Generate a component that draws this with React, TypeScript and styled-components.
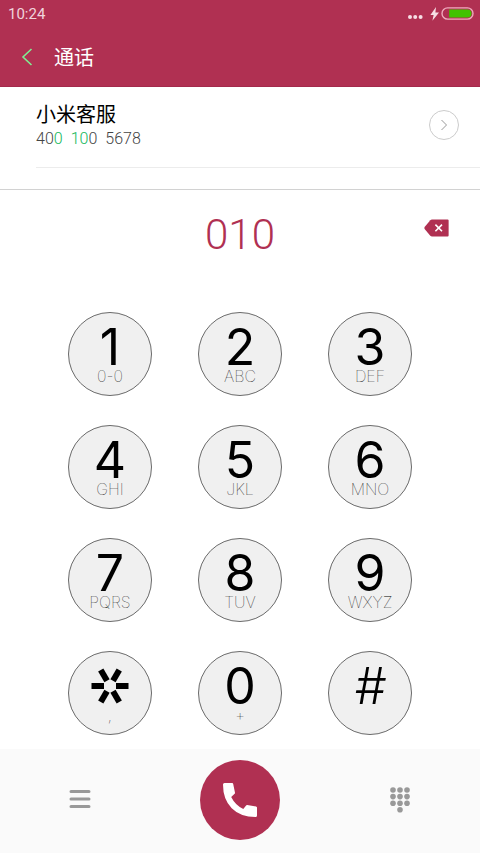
import React from "react";
import styled, { createGlobalStyle } from "styled-components";

const crimson = "#b03052";

const GlobalStyle = createGlobalStyle`
  *, *::before, *::after { box-sizing: border-box; }
  body {
    margin: 0;
    background: #ffffff;
    font-family: Roboto, "Noto Sans CJK SC", sans-serif;
  }
`;

const PlainButton = styled.button`
  padding: 0;
  border: 0;
  background: none;
  color: inherit;
  font: inherit;
  cursor: pointer;
  display: flex;
  align-items: center;
  justify-content: center;
`;

const Screen = styled.div`
  min-height: 100vh;
  display: flex;
  flex-direction: column;
`;

const Header = styled.header`
  background: ${crimson};
  color: #ffffff;
  border-bottom: 1px solid #a32a4c;
`;

const StatusBar = styled.div`
  padding: 0 6px 0 8px;
  display: flex;
  align-items: center;
  justify-content: space-between;
  font-size: 15px;
  line-height: 28px;
  color: #f0d3dc;
`;

const TitleBar = styled.div`
  height: 58px;
  padding: 0 20px;
  display: flex;
  align-items: center;
  gap: 20px;
`;

const BackButton = styled(PlainButton)`
  width: 14px;
  height: 28px;
`;

const Title = styled.h1`
  margin: 0;
  font-family: "Noto Sans CJK SC", sans-serif;
  font-size: 20px;
  line-height: 28px;
  font-weight: 400;
`;

const Contacts = styled.section`
  border-bottom: 1px solid #d2d2d2;
  padding: 0 0 21px 36px;
`;

const ContactRow = styled.div`
  height: 81px;
  padding: 0 21px 4px 0;
  border-bottom: 1px solid #ececec;
  display: flex;
  align-items: center;
  justify-content: space-between;
`;

const ContactName = styled.div`
  font-family: "Noto Sans CJK SC", sans-serif;
  font-size: 20px;
  line-height: 28px;
  color: #000000;
`;

const ContactNumber = styled.div`
  display: flex;
  gap: 8px;
  font-size: 16px;
  line-height: 22px;
  font-weight: 300;
  color: #444444;
`;

const Match = styled.span`
  color: #12b85c;
`;

const DetailButton = styled(PlainButton)`
  width: 30px;
  height: 30px;
  border: 1px solid #cccccc;
  border-radius: 50%;
`;

const Entry = styled.section`
  height: 122px;
  padding: 16px 30px 0;
  display: grid;
  grid-template-columns: 26px 1fr 26px;
  align-items: start;
`;

const EntryNumber = styled.output`
  grid-column: 2;
  text-align: center;
  font-size: 42px;
  line-height: 58px;
  font-weight: 300;
  color: ${crimson};
`;

const DeleteButton = styled(PlainButton)`
  height: 44px;
`;

const Keypad = styled.main`
  flex: 1;
  display: grid;
  grid-template-columns: repeat(3, 84px);
  grid-auto-rows: 84px;
  justify-content: center;
  gap: 29px 46px;
  padding-bottom: 14px;
`;

const Key = styled(PlainButton)`
  border: 1px solid #6a6a6a;
  border-radius: 50%;
  background: #f0f0f0;
  padding-top: 13px;
  flex-direction: column;
  justify-content: flex-start;
  font-family: Inter, "Liberation Sans", sans-serif;
  color: #000000;
`;

const Digit = styled.span<{ $slanted: boolean }>`
  height: 42px;
  display: flex;
  align-items: center;
  font-size: 50px;
  line-height: 42px;
  font-weight: ${(p) => (p.$slanted ? 300 : 400)};
  font-style: ${(p) => (p.$slanted ? "italic" : "normal")};
`;

const Letters = styled.span`
  font-size: 16px;
  line-height: 16px;
  font-weight: 100;
  color: #000000;
`;

const ActionBar = styled.footer`
  height: 104px;
  padding-bottom: 2px;
  background: #fafafa;
  display: grid;
  grid-template-columns: repeat(3, 1fr);
  align-items: center;
  justify-items: center;
`;

const ActionButton = styled(PlainButton)`
  width: 44px;
  height: 44px;
`;

const CallButton = styled(PlainButton)`
  width: 80px;
  height: 80px;
  border-radius: 50%;
  background: ${crimson};
`;

const Star = () => (
  <svg width="36" height="36" viewBox="-18 -18 36 36" stroke="#000" strokeWidth="6" overflow="visible" aria-hidden="true">
    {[0, 60, 120, 180, 240, 300].map((angle) => (
      <line key={angle} x1="6" y1="0" x2="18.5" y2="0" transform={`rotate(${angle})`} />
    ))}
  </svg>
);

const keys = [
  { digit: "1", letters: "0-0" },
  { digit: "2", letters: "ABC" },
  { digit: "3", letters: "DEF" },
  { digit: "4", letters: "GHI" },
  { digit: "5", letters: "JKL" },
  { digit: "6", letters: "MNO" },
  { digit: "7", letters: "PQRS" },
  { digit: "8", letters: "TUV" },
  { digit: "9", letters: "WXYZ" },
  { digit: "*", letters: "," },
  { digit: "0", letters: "+" },
  { digit: "#", letters: "" },
];

export default function App() {
  return (
    <Screen>
      <GlobalStyle />
      <Header>
        <StatusBar>
          <time>10:24</time>
          <svg width="66" height="14" viewBox="0 0 66 14" role="img" aria-label="充电中">
            <g fill="#f6dde4">
              <circle cx="2" cy="10" r="2" />
              <circle cx="7.2" cy="10" r="2" />
              <circle cx="12.6" cy="10" r="2" />
              <path d="M28 0 22.4 8 H25.6 L24.4 13.8 31 5.4 H27.4 Z" />
            </g>
            <rect x="34" y="0.9" width="31" height="11.2" rx="5.6" fill="none" stroke="#f0a9bd" strokeWidth="1.4" />
            <path d="M41.2 2.4 H59.4 a4.1 4.1 0 0 1 0 8.2 H41.2 Z" fill="#41c300" />
          </svg>
        </StatusBar>
        <TitleBar>
          <BackButton aria-label="返回">
            <svg width="12" height="18" viewBox="0 0 12 18" fill="none" stroke="#7fee93" strokeWidth="1.6">
              <path d="M10.5 1 2 9 10.5 17" />
            </svg>
          </BackButton>
          <Title>通话</Title>
        </TitleBar>
      </Header>

      <Contacts>
        <ContactRow>
          <div>
            <ContactName>小米客服</ContactName>
            <ContactNumber>
              <span>40<Match>0</Match></span>
              <span><Match>10</Match>0</span>
              <span>5678</span>
            </ContactNumber>
          </div>
          <DetailButton aria-label="查看详情">
            <svg width="8" height="12" viewBox="0 0 8 12" fill="none" stroke="#999" strokeWidth="1">
              <path d="M1.5 1 6.5 6 1.5 11" />
            </svg>
          </DetailButton>
        </ContactRow>
      </Contacts>

      <Entry>
        <EntryNumber>010</EntryNumber>
        <DeleteButton aria-label="删除">
          <svg width="26" height="18" viewBox="0 0 26 18">
            <path d="M8 .5 H23.6 a1 1 0 0 1 1 1 V16.5 a1 1 0 0 1 -1 1 H8 Q7 17.5 6.3 16.8 L.6 10 Q0 9 .6 8 L6.3 1.2 Q7 .5 8 .5 Z" fill={crimson} />
            <path d="M11.4 5.6 18 12.2 M18 5.6 11.4 12.2" stroke="#fff" strokeWidth="1.6" />
          </svg>
        </DeleteButton>
      </Entry>

      <Keypad>
        {keys.map(({ digit, letters }) => (
          <Key key={digit} aria-label={digit}>
            <Digit $slanted={digit === "#"}>{digit === "*" ? <Star /> : digit}</Digit>
            <Letters>{letters}</Letters>
          </Key>
        ))}
      </Keypad>

      <ActionBar>
        <ActionButton aria-label="菜单">
          <svg width="22" height="22" viewBox="0 0 22 22" stroke="#999" strokeWidth="3" strokeLinecap="round">
            <path d="M2 2.5 H20 M2 10 H20 M2 17.5 H20" />
          </svg>
        </ActionButton>
        <CallButton aria-label="拨号">
          <svg width="34" height="34" viewBox="0 0 34 34" fill="#fff">
            <path d="M1.5 0 H9.2 Q10 0 10.2 1 L12 9.8 Q12.1 10.4 11.6 10.8 L8.2 14 Q12.4 22.4 20.3 26 L23.1 22.6 Q23.5 22 24.2 22.1 L33 23.4 Q34 23.6 34 24.5 V32.5 Q34 34 32.5 34 Q17.5 34 8.7 25.2 Q0 16.5 0 1.5 Q0 0 1.5 0 Z" />
          </svg>
        </CallButton>
        <ActionButton aria-label="拨号键盘">
          <svg width="20" height="26" viewBox="0 0 20 26" fill="#999">
            {[3, 9.6, 16.2].flatMap((y) => [3, 10, 17].map((x) => <circle key={`${x}-${y}`} cx={x} cy={y} r="2.8" />))}
            <circle cx="10" cy="22.8" r="2.8" />
          </svg>
        </ActionButton>
      </ActionBar>
    </Screen>
  );
}
